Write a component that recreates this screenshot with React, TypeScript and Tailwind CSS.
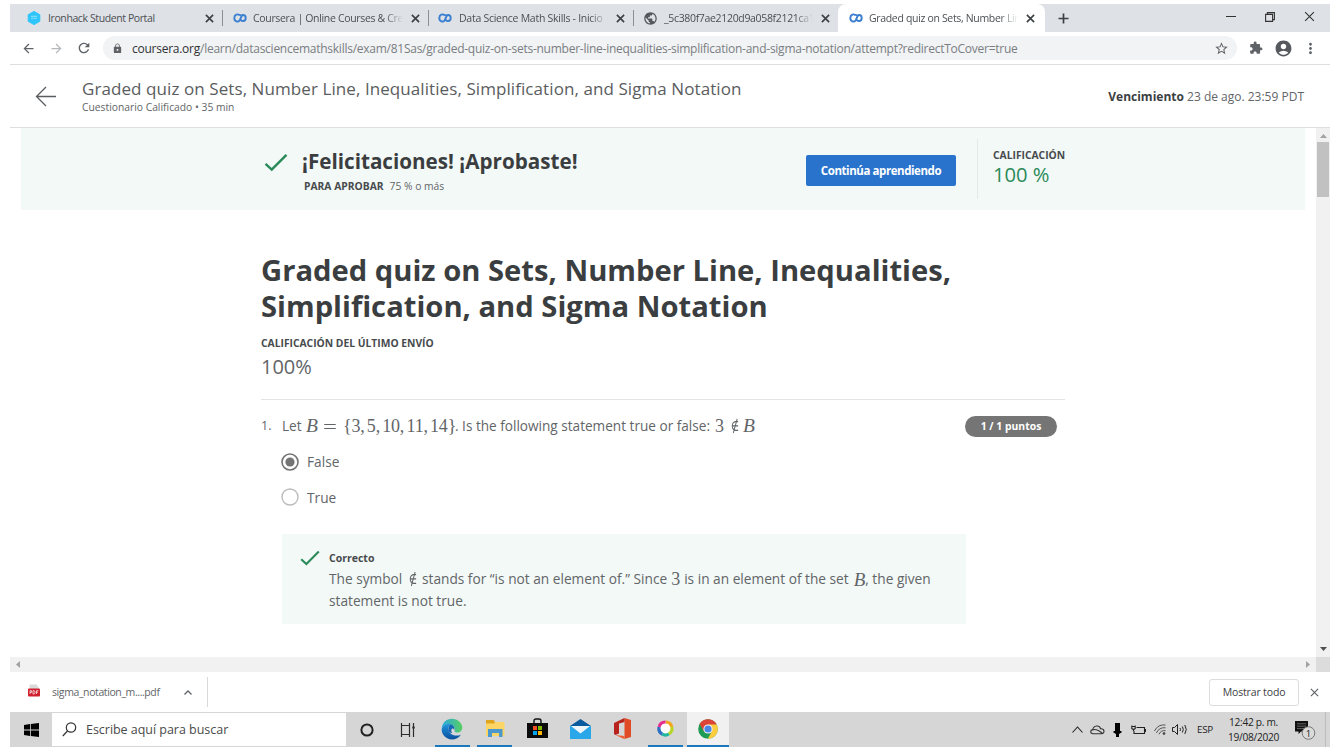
import type { ReactNode } from "react";
import {
  MdArrowBack,
  MdArrowForward,
  MdRefresh,
  MdLock,
  MdStarBorder,
  MdExtension,
  MdAccountCircle,
  MdMoreVert,
  MdPublic,
} from "react-icons/md";

function Cross({ size = 9, color = "#3c4043", width = 1.4 }: { size?: number; color?: string; width?: number }) {
  return (
    <svg width={size} height={size} viewBox="0 0 10 10" fill="none" stroke={color} strokeWidth={width}>
      <path d="M1 1l8 8M9 1l-8 8" />
    </svg>
  );
}

function CourseraIcon() {
  return (
    <svg width="14" height="10" viewBox="0 0 14 10" fill="none" stroke="#3a7fd0" strokeWidth="1.9">
      <path d="M9.2 3.3C8.2 2.2 7.5 1.6 6.2 1.9 5 0.9 1.3 1.3 1.3 5s3.7 4.3 5.2 2.7C7.6 6.6 8 2 10 2c3.6 0 3.6 6 0 6-1 0-1.7-.5-2.3-1.2" />
    </svg>
  );
}

function HexIcon() {
  return (
    <svg width="14" height="14" viewBox="0 0 14 14">
      <path d="M7 .4l5.8 3.3v6.6L7 13.6 1.2 10.3V3.7z" fill="#2dc5fa" stroke="#2dc5fa" strokeLinejoin="round" />
      <path d="M4 5.4h6M4 7.2h6" stroke="#7fddfc" strokeWidth="1.1" />
    </svg>
  );
}

function Tab({ icon, title, className, titleClass, active }: { icon: ReactNode; title: string; className: string; titleClass: string; active?: boolean }) {
  return (
    <div className={`flex h-full shrink-0 items-center ${active ? "rounded-t-lg bg-white" : ""} ${className}`}>
      <span className="flex w-5 shrink-0 items-center">{icon}</span>
      <span className={`min-w-0 flex-1 whitespace-nowrap text-[10.5px] leading-4 text-[#4c5054] ${titleClass}`}>{title}</span>
      <span className="flex w-5 shrink-0 justify-end pr-[3px]">
        <Cross width={1.8} />
      </span>
    </div>
  );
}

function Check({ w, h }: { w: number; h: number }) {
  return (
    <svg width={w} height={h} viewBox="0 0 24 20" fill="none" stroke="#2b8a59" strokeWidth="2.6">
      <path d="M1 11.5l6.5 6L23 2" />
    </svg>
  );
}

function M({ children, className = "" }: { children: ReactNode; className?: string }) {
  return <span className={`font-['Liberation_Serif',serif] leading-none ${className}`}>{children}</span>;
}

function NotIn({ className = "" }: { className?: string }) {
  return (
    <span className={`flex w-[11px] justify-center ${className}`}>
      <span className="inline-block origin-center scale-x-75 font-['DejaVu_Serif',serif] text-[16px] leading-none">∉</span>
    </span>
  );
}

function TaskApp({ children, running, active, className = "w-[42.6px]" }: { children: ReactNode; running?: boolean; active?: boolean; className?: string }) {
  return (
    <div className={`flex h-full shrink-0 items-stretch justify-center ${className}`}>
      <div
        className={`flex items-center justify-center border-b-2 ${active ? "w-[42px] bg-[#f1f1f1]" : "w-[35px]"} ${running || active ? "border-[#1b78bd]" : "border-transparent"}`}
      >
        {children}
      </div>
    </div>
  );
}

export default function App() {
  return (
    <div className="h-[748px] w-[1336px] overflow-hidden bg-white pl-[10px] pr-[6px] pt-1 font-['Open_Sans',sans-serif] text-[#626568]">
      <div className="flex h-[743px] w-[1320px] flex-col overflow-hidden">
        <div className="flex h-[28px] shrink-0 bg-[#dee1e6]">
          <Tab icon={<HexIcon />} title="Ironhack Student Portal" className="w-[212px] pl-[17px] pr-[5px]" titleClass="ml-[1px] tracking-[-0.4px]" />
          <div className="mt-1.5 h-4 w-px bg-[#8b8e93]" />
          <Tab
            icon={<CourseraIcon />}
            title="Coursera | Online Courses & Cre"
            className="w-[205px] pl-[10px] pr-[5px]"
            titleClass="tracking-[-0.33px] [mask-image:linear-gradient(to_right,#000_88%,transparent)]"
          />
          <div className="mt-1.5 h-4 w-px bg-[#8b8e93]" />
          <Tab
            icon={<CourseraIcon />}
            title="Data Science Math Skills - Inicio |"
            className="w-[204px] pl-[9px] pr-[5px]"
            titleClass="ml-[1px] tracking-[-0.27px] [mask-image:linear-gradient(to_right,#000_88%,transparent)]"
          />
          <div className="mt-1.5 h-4 w-px bg-[#8b8e93]" />
          <Tab
            icon={<MdPublic size={15} color="#55585c" />}
            title="_5c380f7ae2120d9a058f2121ca1"
            className="w-[204px] pl-[9px] pr-[5px]"
            titleClass="ml-[1px] tracking-[-0.33px] [mask-image:linear-gradient(to_right,#000_88%,transparent)]"
          />
          <Tab
            active
            icon={<CourseraIcon />}
            title="Graded quiz on Sets, Number Lin"
            className="w-[207px] pl-[11px] pr-[7px]"
            titleClass="tracking-[-0.33px] [mask-image:linear-gradient(to_right,#000_88%,transparent)]"
          />
          <svg className="ml-[13px] mt-[9px]" width="11" height="11" viewBox="0 0 11 11" stroke="#3c4043" strokeWidth="1.7">
            <path d="M5.5 .5v10M.5 5.5h10" />
          </svg>
          <div className="ml-auto flex h-6 items-center pr-[15px]">
            <svg width="10" height="10" viewBox="0 0 10 10" stroke="#333" strokeWidth="1">
              <path d="M0 5.5h10" />
            </svg>
            <svg className="ml-[29px]" width="10" height="11" viewBox="0 0 10 11" fill="none" stroke="#333" strokeWidth="1.1">
              <path d="M.6 3.400h7v7h-7zM2.4 3V1.600h7v7H8" />
            </svg>
            <span className="ml-[29px]">
              <Cross size={11} width={1} color="#333" />
            </span>
          </div>
        </div>

        <div className="flex h-[32px] shrink-0 items-center">
          <MdArrowBack className="ml-[11px] shrink-0" size={15} color="#5f6368" />
          <MdArrowForward className="ml-[13px] shrink-0" size={15} color="#b5b8bb" />
          <MdRefresh className="ml-[12px] shrink-0" size={16} color="#5f6368" />
          <div className="ml-[11px] flex h-6 w-[1134px] items-center rounded-full bg-[#f1f3f4] pl-[9px] pr-2">
            <MdLock size={11} color="#5f6368" />
            <span className="ml-[9px] whitespace-nowrap pt-px text-[12px] leading-4 tracking-[-0.255px] text-[#7a7e83]">
              <span className="text-[#2f3236]">coursera.org</span>
              /learn/datasciencemathskills/exam/81Sas/graded-quiz-on-sets-number-line-inequalities-simplification-and-sigma-notation/attempt?redirectToCover=true
            </span>
            <MdStarBorder className="ml-auto" size={15} color="#5f6368" />
          </div>
          <MdExtension className="ml-[12px] shrink-0" size={14} color="#5f6368" />
          <MdAccountCircle className="ml-[11px] shrink-0" size={19} color="#55595e" />
          <MdMoreVert className="ml-[9px] shrink-0" size={17} color="#5f6368" />
        </div>

        <div className="flex h-[64px] shrink-0 border-b border-t border-[#dddee0]">
          <svg className="ml-[25px] mt-[21px]" width="22" height="21" viewBox="0 0 22 21" fill="none" stroke="#5a5d60" strokeWidth="1.3">
            <path d="M11 1L1.5 10.5 11 20M1.5 10.5H21" />
          </svg>
          <div className="ml-[25px] mt-[12px]">
            <div className="whitespace-nowrap text-[17px] leading-[24px] tracking-[0.08px] text-[#5a5d60]">
              Graded quiz on Sets, Number Line, Inequalities, Simplification, and Sigma Notation
            </div>
            <div className="text-[10.3px] leading-[13px]">Cuestionario Calificado • 35 min</div>
          </div>
          <div className="ml-auto mt-[23px] whitespace-nowrap pr-[26px] text-[12px] leading-[18px]">
            <b className="font-bold text-[#3c3f42]">Vencimiento</b> 23 de ago. 23:59 PDT
          </div>
        </div>

        <div className="flex h-[529px] shrink-0">
          <div className="w-[1306px]">
            <div className="ml-[11px] flex h-[82px] w-[1284px] bg-[#f3f9f7]">
              <div className="ml-[243px] mt-[25px]">
                <Check w={24} h={19} />
              </div>
              <div className="ml-[14px] mt-[19px]">
                <div className="whitespace-nowrap text-[20.65px] font-bold leading-7 text-[#3b3e40]">¡Felicitaciones! ¡Aprobaste!</div>
                <div className="ml-[2px] flex items-center text-[10.3px] leading-[23px]">
                  <b className="whitespace-nowrap text-[#484b4e]">PARA APROBAR</b>
                  <span className="ml-[6px] whitespace-nowrap">75 % o más</span>
                </div>
              </div>
              <div className="ml-auto mt-[27px] flex h-[31px] w-[150px] items-center justify-center whitespace-nowrap rounded-[2px] bg-[#2a73cc] text-[11.500px] font-bold tracking-[-0.43px] text-white">
                Continúa aprendiendo
              </div>
              <div className="ml-[21px] mt-[11px] h-[60px] w-[328px] border-l border-[#e4eae8] pl-[15px] pt-2">
                <div className="text-[10.3px] font-bold leading-4 text-[#484b4e]">CALIFICACIÓN</div>
                <div className="text-[20.200px] leading-[22px] text-[#2c8a5a]">100 %</div>
              </div>
            </div>

            <div className="ml-[251px] w-[804px] pt-[42px]">
              <h1 className="whitespace-nowrap text-[29.2px] font-bold leading-9 text-[#3b3e40]">
                Graded quiz on Sets, Number Line, Inequalities,
                <br />
                Simplification, and Sigma Notation
              </h1>
              <div className="mt-3 text-[10.3px] font-bold leading-[14px] text-[#484b4e]">CALIFICACIÓN DEL ÚLTIMO ENVÍO</div>
              <div className="mt-1 text-[20px] leading-[26px] text-[#626568]">100%</div>
              <div className="mt-[19px] h-px bg-[#e3e4e5]" />

              <div className="mt-[14px] flex h-6 items-center">
                <span className="w-[21px] shrink-0 text-[12.500px]">1.</span>
                <span className="flex items-center whitespace-nowrap text-[13.600px] leading-6">
                  <span className="w-[21px]">Let</span>
                  <M className="ml-[3px] w-[14px] text-[19.500px] italic">B</M>
                  <M className="ml-[3px] w-[16px] origin-left scale-x-[1.3] text-[19px]">=</M>
                  <M className="ml-[4px] w-[112px] text-[18px] tracking-[-0.22px] [word-spacing:-1.900px]">{"{3, 5, 10, 11, 14}"}</M>
                  <span className="w-[256px]">. Is the following statement true or false:</span>
                  <M className="ml-[4px] text-[18px]">3</M>
                  <NotIn className="ml-[5px]" />
                  <M className="ml-[3px] text-[19.500px] italic">B</M>
                </span>
                <span className="ml-auto mr-[8px] flex h-[21px] w-[92px] items-center justify-center whitespace-nowrap rounded-full bg-[#757575] pt-px text-[10.4px] font-bold text-white">
                  1 / 1 puntos
                </span>
              </div>

              <div className="ml-[20px] mt-[14px] flex h-[20px] items-center">
                <svg width="18" height="18" viewBox="0 0 18 18">
                  <circle cx="9" cy="9" r="8" fill="none" stroke="#757575" strokeWidth="1.6" />
                  <circle cx="9" cy="9" r="4.6" fill="#757575" />
                </svg>
                <span className="ml-[8px] text-[13.700px]">False</span>
              </div>
              <div className="ml-[20px] mt-[15px] flex h-[20px] items-center">
                <svg width="18" height="18" viewBox="0 0 18 18">
                  <circle cx="9" cy="9" r="8" fill="none" stroke="#bdbdbd" strokeWidth="1.4" />
                </svg>
                <span className="ml-[8px] pt-[2px] text-[13.700px]">True</span>
              </div>

              <div className="ml-[21px] mt-[27px] flex h-[90px] w-[684px] bg-[#f3f9f7]">
                <div className="ml-[18px] mt-[16px]">
                  <Check w={20} h={16} />
                </div>
                <div className="ml-[9px] mt-[15px]">
                  <div className="text-[10.500px] font-bold leading-[19px] text-[#484b4e]">Correcto</div>
                  <div className="flex h-[22px] items-center whitespace-nowrap text-[13.700px] leading-[22px]">
                    <span className="w-[74px]">The symbol</span>
                    <NotIn className="ml-[4px]" />
                    <span className="ml-[4px]">stands for “is not an element of.” Since</span>
                    <M className="ml-[4px] text-[18px]">3</M>
                    <span className="ml-[4px]">is in an element of the set</span>
                    <M className="ml-[5px] text-[19px] italic">B</M>
                    <span>, the given</span>
                  </div>
                  <div className="text-[13.700px] leading-[22px]">statement is not true.</div>
                </div>
              </div>
            </div>
          </div>
          <div className="flex w-[14px] flex-col items-center bg-[#f1f1f1]">
            <svg className="mt-[6px]" width="7" height="4" viewBox="0 0 7 4">
              <path d="M0 4L3.5 0 7 4z" fill="#a3a3a3" />
            </svg>
            <div className="mt-[4px] h-[55px] w-3 bg-[#c1c1c1]" />
            <svg className="mb-[6px] mt-auto" width="7" height="4" viewBox="0 0 7 4">
              <path d="M0 0l3.5 4L7 0z" fill="#505050" />
            </svg>
          </div>
        </div>

        <div className="flex h-[15px] shrink-0 items-center bg-[#f1f1f1]">
          <svg className="ml-[6px]" width="4" height="7" viewBox="0 0 4 7">
            <path d="M4 0L0 3.5 4 7z" fill="#a3a3a3" />
          </svg>
          <svg className="ml-auto mr-[6px]" width="4" height="7" viewBox="0 0 4 7">
            <path d="M0 0l4 3.5L0 7z" fill="#a3a3a3" />
          </svg>
          <div className="h-full w-[14px] bg-[#dcdcdc]" />
        </div>

        <div className="flex h-[40px] shrink-0 items-center">
          <svg className="mb-[3px] ml-[18px]" width="12" height="13" viewBox="0 0 12 13">
            <path d="M1.5.5h7l2 2.5v9h-9z" fill="#d9dadb" />
            <rect x="0" y="4.5" width="12" height="8" rx="1" fill="#d0202e" />
            <path d="M2 10V6.7h1.6v1.6H2M5 6.7h1q1 0 1 1.6T6 10H5zM8.5 10V6.7h2M8.5 8.3h1.4" fill="none" stroke="#fff" strokeWidth=".7" />
          </svg>
          <span className="ml-[12px] w-[112px] whitespace-nowrap pt-[2px] text-[10.500px] tracking-[-0.4px]">sigma_notation_m....pdf</span>
          <svg className="ml-[20px]" width="8" height="5" viewBox="0 0 8 5" fill="none" stroke="#5f6368" strokeWidth="1.3">
            <path d="M.5 4.5L4 1l3.500 3.500" />
          </svg>
          <div className="ml-[15px] h-[30px] w-px bg-[#d8d9db]" />
          <div className="ml-auto flex h-[27px] w-[90px] items-center justify-center whitespace-nowrap rounded-[3px] border border-[#dadce0] pt-px text-[10.500px] tracking-[-0.15px] text-[#3c4043]">
            Mostrar todo
          </div>
          <span className="ml-[11px] mr-[11px]">
            <Cross size={9} color="#5f6368" width={1.3} />
          </span>
        </div>

        <div className="flex h-[35px] shrink-0 items-stretch bg-[#d6d6d6]">
          <div className="flex w-[42px] items-center justify-center">
            <svg width="15" height="14" viewBox="0 0 15 14" fill="#000">
              <path d="M0 2l6-.9v5.5H0zM6.800 1L15 0v6.600H6.800zM0 7.400h6v5.500L0 12zM6.800 7.400H15V14l-8.200-1.100z" />
            </svg>
          </div>
          <div className="my-[1px] flex w-[294px] items-center bg-white">
            <svg className="ml-[10px]" width="15" height="15" viewBox="0 0 15 15" fill="none" stroke="#333" strokeWidth="1.2">
              <circle cx="9" cy="5.500" r="4.700" />
              <path d="M5.500 9L.8 14" />
            </svg>
            <span className="ml-[9px] whitespace-nowrap pt-[2px] text-[12.500px] tracking-[-0.03px] text-[#4a4a4a]">Escribe aquí para buscar</span>
          </div>
          <div className="flex w-[42px] items-center justify-center">
            <svg width="14" height="14" viewBox="0 0 14 14">
              <circle cx="7" cy="7" r="5.600" fill="none" stroke="#222" strokeWidth="2" />
            </svg>
          </div>
          <div className="flex w-[40px] items-center justify-center">
            <svg width="16" height="14" viewBox="0 0 16 14" fill="none" stroke="#2c2c2c" strokeWidth="1.200">
              <path d="M1.500 0v2.500h8V0M1.500 14v-2.500h8V14M1.500 2.500v9M9.500 2.500v9M13.500 0v14" />
              <path d="M12.300 4.500h2.400" strokeWidth="2" />
            </svg>
          </div>
          <div className="ml-[3px] flex">
            <TaskApp running>
              <svg width="22" height="22" viewBox="0 0 22 22">
                <defs>
                  <linearGradient id="edgeTop" x1="0" x2="1">
                    <stop offset="0" stopColor="#2aa8e0" />
                    <stop offset="1" stopColor="#57cf62" />
                  </linearGradient>
                  <linearGradient id="edgeBase" x1="0" x2="0" y1="0" y2="1">
                    <stop offset="0" stopColor="#1f93da" />
                    <stop offset="1" stopColor="#0b50a0" />
                  </linearGradient>
                </defs>
                <path d="M.7 11C1 4.500 5.500.7 11 .7S21.300 5 21.300 9.500c0 3.300-2.400 5-5 5-2 0-3.300-.7-2.800-1.600.5-1 .5-3.300-1.400-5C9 5 3 6 .7 11z" fill="url(#edgeTop)" />
                <path d="M.7 11C2.500 7 6 5.500 9.500 6.300 6.500 8 6.500 15 12 17c3 1.100 5.800.6 8-.6-2 3.200-5.400 5-9 5C5 21.400.4 16.500.7 11z" fill="url(#edgeBase)" />
                <path d="M9.300 6.300c3 .5 4.500 3 4.100 5.200-.5 1.500-.6 2.400.3 3-2.200 1-5.300.8-6-1.800-.5-2.400 0-4.800 1.600-6.400z" fill="#1566b5" />
                <path d="M11.200 10.500c-1.500 1-1.400 4.500 1.800 5.600 3 1 6 .3 7.600-1.100-3.500.6-7 .2-7-1.500 0-1.300-.8-3.200-2.400-3z" fill="#d6d6d6" />
              </svg>
            </TaskApp>
            <TaskApp running>
              <svg width="20" height="17" viewBox="0 0 20 17">
                <path d="M1 0h8l1 2.500H1z" fill="#e0a51f" />
                <path d="M1 2h18.500v14H1z" fill="#fbd667" />
                <path d="M1 2h8.500v1.500H1z" fill="#e0a51f" />
                <path d="M3 9h14.500v8H14v-4H7v4H3z" fill="#4c97cb" />
              </svg>
            </TaskApp>
            <TaskApp>
              <svg width="21" height="21" viewBox="0 0 21 21">
                <path d="M7 6V3q0-2 2-2h3q2 0 2 2v3" fill="none" stroke="#111" strokeWidth="1.400" />
                <path d="M0 5h21v15H0z" fill="#0b0b0b" />
                <path d="M6 8h4v4H6z" fill="#f25022" />
                <path d="M11 8h4v4h-4z" fill="#7fba00" />
                <path d="M6 13h4v4H6z" fill="#00a4ef" />
                <path d="M11 13h4v4h-4z" fill="#ffb900" />
              </svg>
            </TaskApp>
            <TaskApp>
              <svg width="21" height="20" viewBox="0 0 21 20">
                <path d="M0 7L10.500 0 21 7v3H0z" fill="#0a5a9e" />
                <path d="M0 7h21v13H0z" fill="#2aa7e8" />
                <path d="M1 7h19l-9.500 7.500z" fill="#eef6fb" />
              </svg>
            </TaskApp>
            <TaskApp>
              <svg width="17" height="21" viewBox="0 0 17 21">
                <path d="M10.500 0L17 2v17l-6.500 2z" fill="#e04a24" />
                <path d="M0 5L10.500 0v4L5 5.600v10L1.500 17 0 16z" fill="#b8231d" />
                <path d="M1.500 17l9 1v3L9 20.500z" fill="#ef5c35" />
              </svg>
            </TaskApp>
            <TaskApp running>
              <svg width="17" height="17" viewBox="0 0 17 17" fill="none" strokeWidth="3.200">
                <circle cx="8.500" cy="8.500" r="6" fill="#fff" />
                <path d="M8.500 2a6.500 6.500 0 0 1 6.300 5" stroke="#f3a51c" />
                <path d="M14.800 7a6.500 6.500 0 0 1-3 7" stroke="#b7d62c" />
                <path d="M11.800 14a6.500 6.500 0 0 1-6.600.1" stroke="#20b79e" />
                <path d="M5.200 14.100A6.500 6.500 0 0 1 2.100 7" stroke="#2d6fc1" />
                <path d="M2.100 7a6.500 6.500 0 0 1 6.400-5" stroke="#e42f91" />
              </svg>
            </TaskApp>
            <TaskApp active>
              <svg width="20" height="20" viewBox="0 0 20 20">
                <circle cx="10" cy="10" r="9.800" fill="#1e9b54" />
                <path d="M10 10L1.500 5.100A9.800 9.800 0 0 1 18.500 5.100z" fill="#dc4437" />
                <path d="M10 5.500h8.700A9.800 9.800 0 0 1 9.800 19.800L14 12z" fill="#fccd3f" />
                <path d="M1.500 5.100L6 12.500 10 10V5.500H3z" fill="#dc4437" />
                <circle cx="10" cy="10" r="4.600" fill="#f4f4f4" />
                <circle cx="10" cy="10" r="3.600" fill="#4a85e8" />
              </svg>
            </TaskApp>
          </div>
          <div className="ml-auto flex items-center text-[#222]">
            <svg width="11" height="7" viewBox="0 0 11 7" fill="none" stroke="#222" strokeWidth="1.100">
              <path d="M.5 6.500l5-5.500 5 5.500" />
            </svg>
            <svg className="ml-[7px]" width="15" height="10" viewBox="0 0 15 10" fill="none" stroke="#333" strokeWidth="1.100">
              <path d="M3 8.800C0 8.600 0 5 2.800 4.600 3.500.2 9.500-.3 10.600 3.800c4.200-.4 4.500 5 .9 5zM2.500 5C5 3.600 8 4.500 12.500 8.500" />
            </svg>
            <svg className="ml-[8px]" width="9" height="14" viewBox="0 0 9 14" fill="#000">
              <path d="M2 0h5v8H2zM.5 8h8v1.500L6 11v3H3v-3L.5 9.500z" />
            </svg>
            <svg className="ml-[9px]" width="15" height="10" viewBox="0 0 15 10" fill="none" stroke="#222" strokeWidth="1.100">
              <path d="M5.500 2.500h8v6H3V6M14.500 4v3M.8 .5v3q1.700 1.500 3.400 0v-3M.5 1.500h4M2.500 4v2" />
            </svg>
            <svg className="ml-[8px]" width="12" height="11" viewBox="0 0 12 11" fill="none" stroke="#555" strokeWidth="1">
              <path d="M.5 7A10 10 0 0 1 11.500 1M2.500 9A8 8 0 0 1 11.500 3.800M5 10.300a6 6 0 0 1 6.500-3.600" />
              <circle cx="10" cy="9.500" r="1" fill="#333" />
            </svg>
            <svg className="ml-[6px]" width="16" height="11" viewBox="0 0 16 11" fill="none" stroke="#222" strokeWidth="1">
              <path d="M.5 3.500h2l3-3v10l-3-3h-2zM8 4q1 1.500 0 3M10.300 2.500q2 3 0 6M12.800 1q3 4.500 0 9" />
            </svg>
            <span className="ml-[9px] w-[17px] whitespace-nowrap pt-px text-[9.800px] tracking-[-0.3px]">ESP</span>
            <div className="ml-[13px] w-[53px] whitespace-nowrap text-center text-[10.200px] leading-[15px] tracking-[-0.3px]">
              <div>12:42 p. m.</div>
              <div>19/08/2020</div>
            </div>
            <svg className="ml-[14px] mr-[9px]" width="22" height="20" viewBox="0 0 22 20">
              <path d="M1 1h13v10.500H7L4.500 14v-2.500H1z" fill="#111" />
              <path d="M3 3.800h9M3 6.200h9M3 8.600h7" stroke="#888" strokeWidth=".7" />
              <circle cx="14.500" cy="13" r="6.300" fill="#dadada" stroke="#777" />
              <text x="14.500" y="16.500" textAnchor="middle" fontSize="9.500" fill="#222">
                1
              </text>
            </svg>
            <div className="h-full w-px bg-[#bdbdbd]" />
            <div className="w-[4px]" />
          </div>
        </div>
      </div>
    </div>
  );
}
